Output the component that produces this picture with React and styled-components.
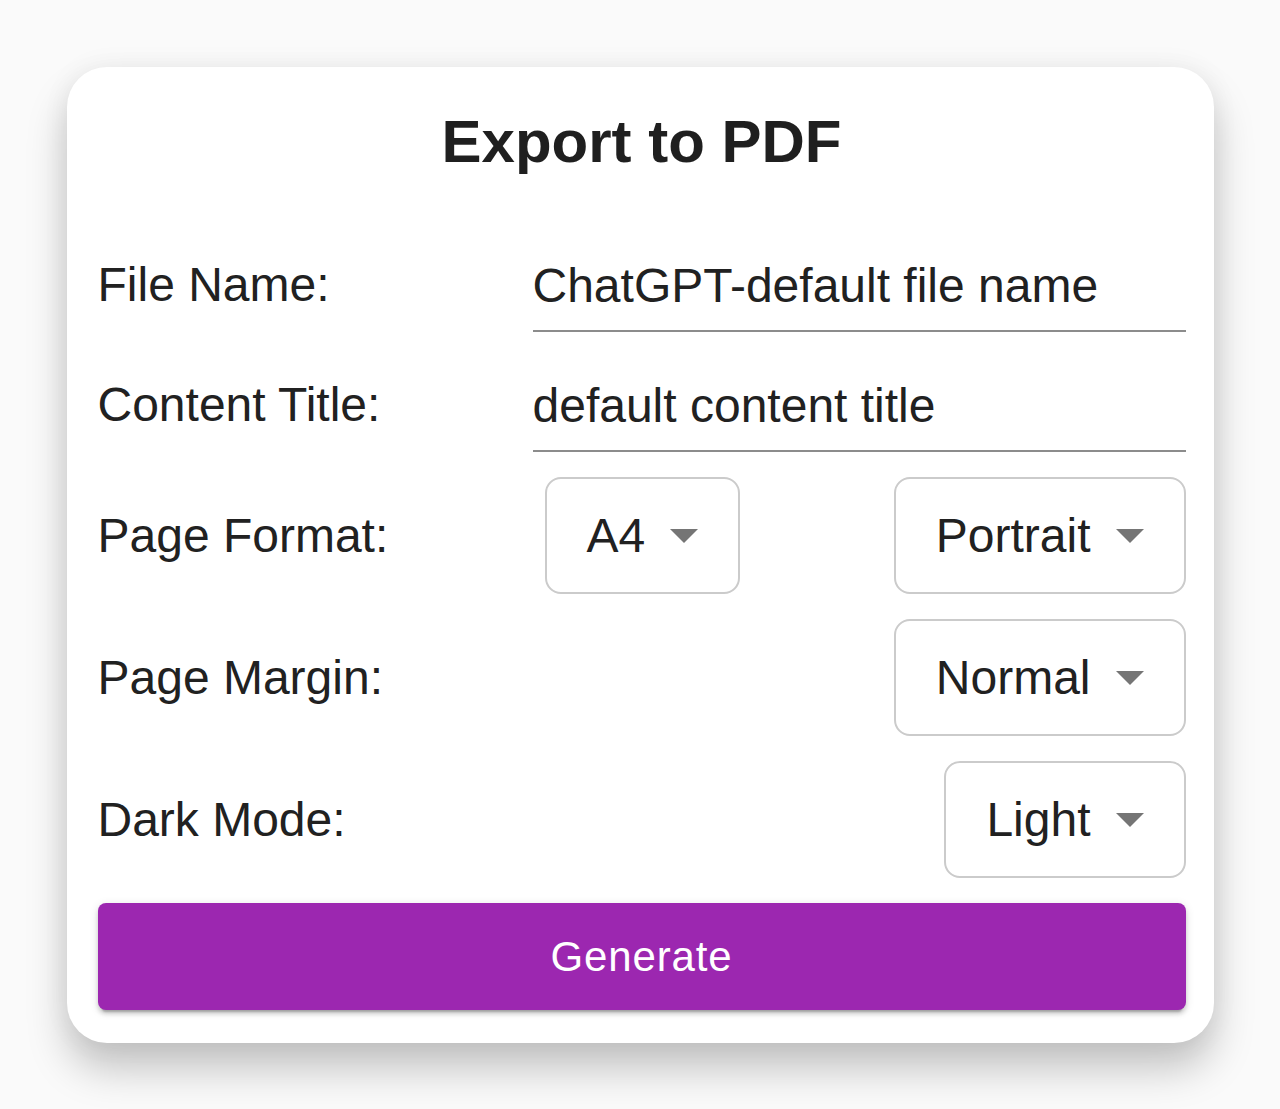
import React from "react";
import styled, { createGlobalStyle } from "styled-components";

const Global = createGlobalStyle`
  html, body { margin: 0; padding: 0; background: #fafafa; }
  body { font-family: "Liberation Sans", Helvetica, Arial, sans-serif; }
`;

const Page = styled.div`
  display: flex;
  justify-content: center;
  align-items: flex-start;
  padding-top: 67px;
  min-height: 1109px;
  box-sizing: border-box;
`;

const Card = styled.div`
  width: 1147px;
  box-sizing: border-box;
  padding: 32px 28px 33px 31px;
  background: #fff;
  border-radius: 40px;
  box-shadow: 0 26px 40px rgba(0, 0, 0, 0.22), 0 0 28px rgba(0, 0, 0, 0.06);
`;

const Title = styled.h1`
  margin: 0 0 52px;
  text-align: center;
  font-size: 60px;
  line-height: 86px;
  font-weight: 700;
  color: #1f1f1f;
`;

const Form = styled.div`
  display: flex;
  flex-direction: column;
  gap: 25px;
`;

const Row = styled.div`
  display: flex;
  align-items: center;
`;

const Label = styled.div`
  flex: 0 0 435px;
  font-size: 48px;
  line-height: 55px;
  color: #212121;
`;

const Field = styled.div`
  flex: 1;
  padding: 21px 0 17px;
  font-size: 48px;
  line-height: 55px;
  color: #212121;
  border-bottom: 2px solid #8c8c8c;
`;

const Values = styled.div`
  flex: 1;
  display: flex;
  justify-content: ${(p) => (p.$spread ? "space-between" : "flex-end")};
`;

const Select = styled.div`
  display: inline-flex;
  align-items: center;
  gap: 25px;
  height: 117px;
  box-sizing: border-box;
  padding: 0 40px;
  margin-left: ${(p) => p.$offset || 0}px;
  border: 2px solid #cbcbcb;
  border-radius: 16px;
  font-size: 48px;
  line-height: 55px;
  color: #212121;
`;

const Arrow = () => (
  <svg width="28" height="14" viewBox="0 0 28 14" aria-hidden="true">
    <polygon points="0,0 28,0 14,14" fill="#757575" />
  </svg>
);

const Button = styled.button`
  margin-top: 25px;
  width: 100%;
  height: 107px;
  border: none;
  border-radius: 8px;
  background: #9c27b0;
  color: #fff;
  font-family: inherit;
  font-size: 42px;
  font-weight: 500;
  letter-spacing: 0.02em;
  cursor: pointer;
  box-shadow: 0 6px 2px -4px rgba(0, 0, 0, 0.2), 0 4px 4px rgba(0, 0, 0, 0.14),
    0 2px 10px rgba(0, 0, 0, 0.12);
`;

export default function App() {
  return (
    <>
      <Global />
      <Page>
        <Card>
          <Title>Export to PDF</Title>
          <Form>
            <Row>
              <Label>File Name:</Label>
              <Field>ChatGPT-default file name</Field>
            </Row>
            <Row>
              <Label>Content Title:</Label>
              <Field>default content title</Field>
            </Row>
            <Row>
              <Label>Page Format:</Label>
              <Values $spread>
                <Select $offset={12}>
                  A4 <Arrow />
                </Select>
                <Select>
                  Portrait <Arrow />
                </Select>
              </Values>
            </Row>
            <Row>
              <Label>Page Margin:</Label>
              <Values>
                <Select>
                  Normal <Arrow />
                </Select>
              </Values>
            </Row>
            <Row>
              <Label>Dark Mode:</Label>
              <Values>
                <Select>
                  Light <Arrow />
                </Select>
              </Values>
            </Row>
          </Form>
          <Button>Generate</Button>
        </Card>
      </Page>
    </>
  );
}
